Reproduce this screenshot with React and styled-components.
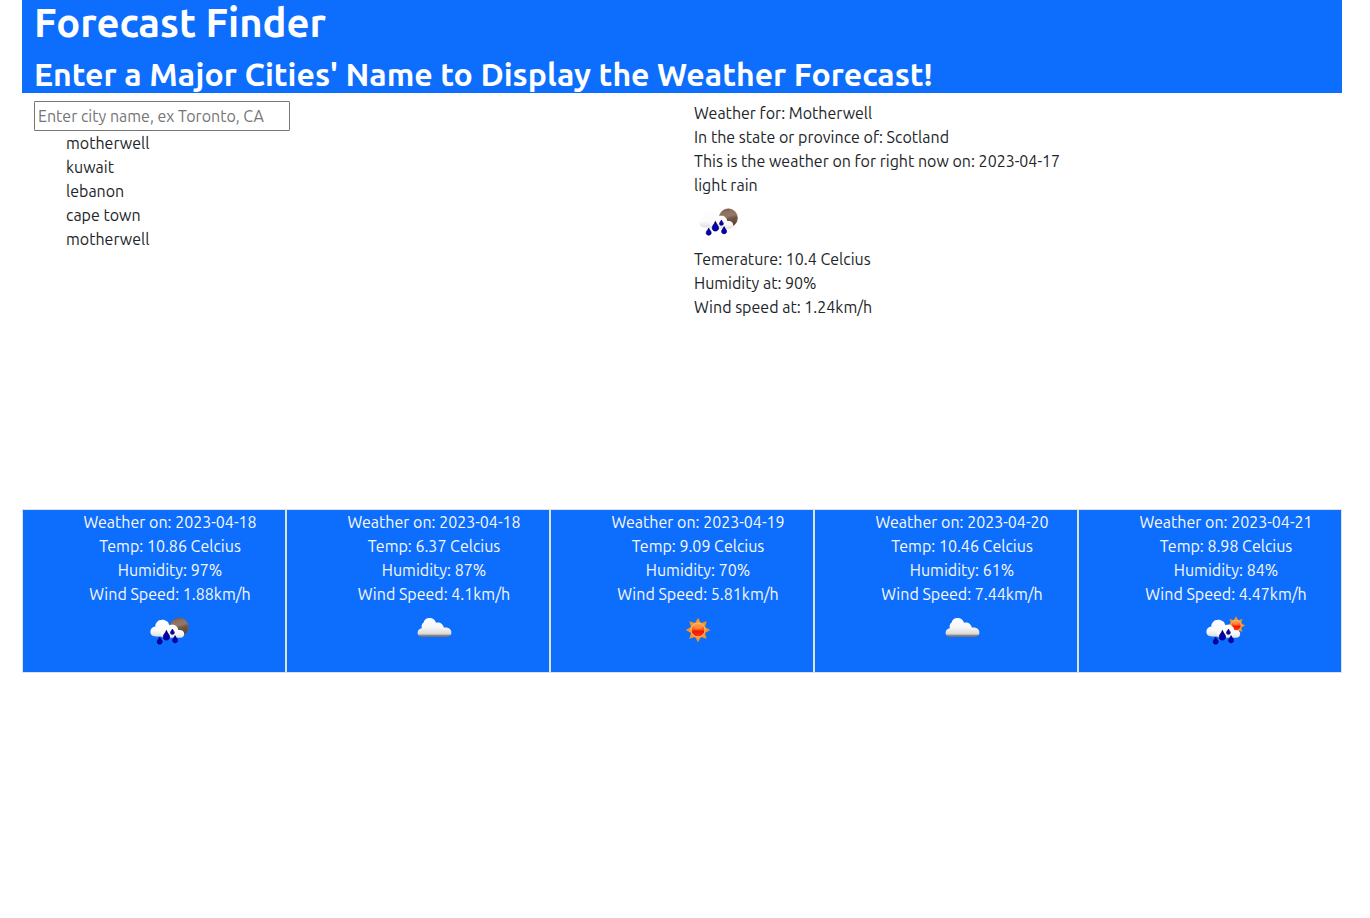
import React, { useId } from "react";
import styled, { createGlobalStyle } from "styled-components";

const GlobalStyle = createGlobalStyle`
  *, *::before, *::after { box-sizing: border-box; }
  body {
    margin: 0;
    background: #fff;
    color: #212529;
    font-family: Ubuntu, "Open Sans", "Noto Sans", sans-serif;
    font-size: 16px;
    line-height: 24px;
  }
  h1, h2, p, ul { margin: 0; padding: 0; }
`;

const Page = styled.div`
  max-width: 1370px;
  margin: 0 auto;
  padding: 0 28px 0 22px;
`;

const Header = styled.header`
  padding: 0 12px;
  background: #0d6efd;
  color: #fff;
`;

const Title = styled.h1`
  margin-bottom: 10px;
  font-size: 40px;
  font-weight: 600;
  line-height: 46px;
`;

const Subtitle = styled.h2`
  font-size: 32px;
  font-weight: 600;
  line-height: 37px;
`;

const Main = styled.main`
  display: grid;
  grid-template-columns: 1fr 1fr;
  margin: 8px 0 190px;
`;

const Column = styled.section`
  padding: 0 12px;
`;

const SearchInput = styled.input`
  display: block;
  width: 256px;
  height: 30px;
  padding: 1px 3px;
  border: 1px solid #767676;
  border-radius: 1px;
  font: inherit;
  color: inherit;

  &::placeholder { color: #757575; }
`;

const History = styled.ul`
  padding-left: 32px;
  list-style: none;
`;

const Forecast = styled.section`
  display: grid;
  grid-template-columns: repeat(5, 1fr);
`;

const Day = styled.article`
  padding: 0 0 16px 32px;
  border: 1px solid #dee2e6;
  background: #0d6efd;
  color: #f8f9fa;
  text-align: center;
`;

const Icon = styled.svg`
  display: block;
  width: 50px;
  height: 50px;
  margin: ${(p) => (p.$centered ? "0 auto" : "0")};
`;

const CLOUD =
  "M12.5 31C10 31 8.6 29.2 8.6 26.8C8.6 24.3 10.2 22.6 12.8 22.2C12 19 13.4 17.4 14.6 16.6C15 14 17.4 12 20.4 12C23.8 12 26.2 14 27 16.8C30.6 15.6 34.2 17.8 34.8 21.6C39.4 21.2 42.4 23.3 42.4 26.4C42.4 29.3 40.5 31 37.8 31Z";
const BIG_CLOUD =
  "M11 30.5C7.4 30.5 5.4 28.6 5.4 25.8C5.4 23 7.4 21 10.3 20.6C10.4 16.6 13.3 13.8 17.2 13.8C21 13.8 23.6 16 24.4 19.5L27 20L29 30.5Z";
const SMALL_CLOUD =
  "M19 31.8C16.8 31.8 15.7 30.2 15.7 28.5C15.7 26.5 17.5 25.1 20.2 25C20.6 21 23.3 18.7 27 18.7C30.5 18.7 33 20.7 33.2 24C37 23.6 39.2 25.2 39.2 28C39.2 30.4 37.6 31.8 35.2 31.8Z";

function starPoints(cx, cy, outer, inner) {
  return Array.from({ length: 16 }, (_, i) => {
    const r = i % 2 ? inner : outer;
    const a = (i * Math.PI) / 8 - Math.PI / 2;
    return `${(cx + r * Math.cos(a)).toFixed(2)},${(cy + r * Math.sin(a)).toFixed(2)}`;
  }).join(" ");
}

function Sun({ id, cx, cy, r }) {
  return (
    <g>
      <polygon points={starPoints(cx, cy, r * 1.75, r * 1.08)} fill="#f7941d" />
      <circle cx={cx} cy={cy} r={r} fill={`url(#${id}-sun)`} stroke="#ffc680" strokeWidth={r / 7} />
      <ellipse cx={cx} cy={cy - r * 0.5} rx={r * 0.66} ry={r * 0.38} fill="#ffb05a" opacity="0.45" />
    </g>
  );
}

function Drop({ x, y, w, h }) {
  return (
    <path
      d={`M${x} ${y}C${x + w * 0.12} ${y + h * 0.28} ${x + w / 2} ${y + h * 0.42} ${x + w / 2} ${y + h * 0.68}C${x + w / 2} ${y + h * 1.1} ${x - w / 2} ${y + h * 1.1} ${x - w / 2} ${y + h * 0.68}C${x - w / 2} ${y + h * 0.42} ${x - w * 0.12} ${y + h * 0.28} ${x} ${y}Z`}
      fill="#0000b4"
      stroke="#00005c"
      strokeWidth="0.7"
    />
  );
}

function WeatherIcon({ kind, label, centered }) {
  const id = useId().replace(/[^a-zA-Z0-9]/g, "");
  const rain = kind === "rain-night" || kind === "rain-day";
  return (
    <Icon viewBox="0 0 50 50" role="img" aria-label={label} $centered={centered}>
      <defs>
        <linearGradient id={`${id}-cloud`} x1="0" y1="0" x2="0" y2="1">
          <stop offset="0" stopColor="#fff" />
          <stop offset="0.5" stopColor="#f6f6f6" />
          <stop offset="0.84" stopColor="#dadada" />
          <stop offset="0.91" stopColor="#8c8c8c" />
          <stop offset="1" stopColor="#6c6c6c" />
        </linearGradient>
        <linearGradient id={`${id}-soft`} x1="0" y1="0" x2="0" y2="1">
          <stop offset="0" stopColor="#fff" />
          <stop offset="0.65" stopColor="#fbfbfb" />
          <stop offset="1" stopColor="#dedede" />
        </linearGradient>
        <linearGradient id={`${id}-moon`} x1="0.35" y1="0" x2="0.6" y2="1">
          <stop offset="0" stopColor="#6b5040" />
          <stop offset="0.15" stopColor="#8b7060" />
          <stop offset="0.4" stopColor="#94796a" />
          <stop offset="0.55" stopColor="#745846" />
          <stop offset="1" stopColor="#54392a" />
        </linearGradient>
        <linearGradient id={`${id}-sun`} x1="0" y1="0" x2="0" y2="1">
          <stop offset="0" stopColor="#ff9b32" />
          <stop offset="0.45" stopColor="#ff5a1c" />
          <stop offset="0.6" stopColor="#f51505" />
          <stop offset="1" stopColor="#ff3b0a" />
        </linearGradient>
      </defs>
      {kind === "sun" && <Sun id={id} cx={25} cy={24} r={7} />}
      {kind === "cloud" && <path d={CLOUD} fill={`url(#${id}-cloud)`} />}
      {kind === "rain-night" && (
        <circle cx="34.3" cy="21" r="9.2" fill={`url(#${id}-moon)`} stroke="#7d6352" strokeWidth="0.6" />
      )}
      {kind === "rain-day" && <Sun id={id} cx={35} cy={19.4} r={5.2} />}
      {rain && (
        <g>
          <path d={BIG_CLOUD} fill={`url(#${id}-soft)`} />
          <path d={SMALL_CLOUD} fill={`url(#${id}-soft)`} />
          <Drop x={21.4} y={24.3} w={6.4} h={9.8} />
          <Drop x={14.7} y={31} w={5} h={7.2} />
          <Drop x={27.4} y={23} w={3.8} h={5.4} />
          <Drop x={30.1} y={29.6} w={5} h={7.2} />
        </g>
      )}
    </Icon>
  );
}

const cities = ["motherwell", "kuwait", "lebanon", "cape town", "motherwell"];

const days = [
  { date: "2023-04-18", temp: "10.86", humidity: 97, wind: "1.88", kind: "rain-night", label: "light rain" },
  { date: "2023-04-18", temp: "6.37", humidity: 87, wind: "4.1", kind: "cloud", label: "clouds" },
  { date: "2023-04-19", temp: "9.09", humidity: 70, wind: "5.81", kind: "sun", label: "clear sky" },
  { date: "2023-04-20", temp: "10.46", humidity: 61, wind: "7.44", kind: "cloud", label: "clouds" },
  { date: "2023-04-21", temp: "8.98", humidity: 84, wind: "4.47", kind: "rain-day", label: "light rain" },
];

export default function App() {
  return (
    <>
      <GlobalStyle />
      <Page>
        <Header>
          <Title>Forecast Finder</Title>
          <Subtitle>Enter a Major Cities' Name to Display the Weather Forecast!</Subtitle>
        </Header>
        <Main>
          <Column>
            <SearchInput type="text" aria-label="City name" placeholder="Enter city name, ex Toronto, CA" />
            <History>
              {cities.map((city, i) => (
                <li key={i}>{city}</li>
              ))}
            </History>
          </Column>
          <Column>
            <p>Weather for: Motherwell</p>
            <p>In the state or province of: Scotland</p>
            <p>This is the weather on for right now on: 2023-04-17</p>
            <p>light rain</p>
            <WeatherIcon kind="rain-night" label="light rain" />
            <p>Temerature: 10.4 Celcius</p>
            <p>Humidity at: 90%</p>
            <p>Wind speed at: 1.24km/h</p>
          </Column>
        </Main>
        <Forecast>
          {days.map((day, i) => (
            <Day key={i}>
              <p>Weather on: {day.date}</p>
              <p>Temp: {day.temp} Celcius</p>
              <p>Humidity: {day.humidity}%</p>
              <p>Wind Speed: {day.wind}km/h</p>
              <WeatherIcon kind={day.kind} label={day.label} centered />
            </Day>
          ))}
        </Forecast>
      </Page>
    </>
  );
}
